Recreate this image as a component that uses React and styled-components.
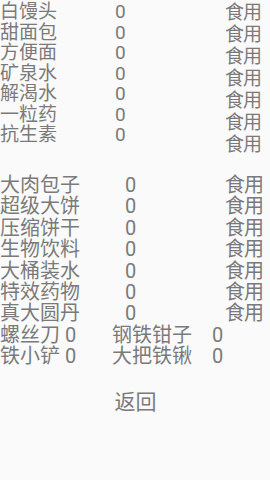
import styled, { createGlobalStyle } from 'styled-components';

const GlobalStyle = createGlobalStyle`
    html, body {
        margin: 0;
        padding: 0;
        background: #fafafa;
    }
    body {
        font-family: Roboto, "Noto Sans CJK SC", sans-serif;
        color: #7a7a7a;
    }
`;

const Page = styled.div`
    width: 270px;
    height: 480px;
    box-sizing: border-box;
    padding-top: 2px;
    display: flex;
    flex-direction: column;
    background: #fafafa;
`;

const FoodGroup = styled.div`
    display: flex;
    align-items: flex-start;
`;

const Column = styled.div`
    display: flex;
    flex-direction: column;
    width: ${(p) => p.w || 'auto'};
    font-size: ${(p) => p.size}px;
    line-height: ${(p) => p.lh}px;
`;

const Cell = styled.div`
    white-space: nowrap;
`;

const UseButton = styled.div`
    height: ${(p) => p.h}px;
    line-height: ${(p) => p.h}px;
    white-space: nowrap;
    letter-spacing: -1px;
`;

const SecondGroup = styled.div`
    margin-top: 19px;
    display: flex;
    flex-direction: column;
    font-size: 20px;
    line-height: 21.4px;
`;

const Row = styled.div`
    display: grid;
    grid-template-columns: ${(p) => p.cols};
    white-space: nowrap;
`;

const Back = styled.div`
    margin-top: 22px;
    align-self: center;
    font-size: 21px;
    line-height: 24px;
    padding-left: 1px;
`;

const first = ['白馒头', '甜面包', '方便面', '矿泉水', '解渴水', '一粒药', '抗生素'];
const second = ['大肉包子', '超级大饼', '压缩饼干', '生物饮料', '大桶装水', '特效药物', '真大圆丹'];
const tools = [
    ['螺丝刀', '钢铁钳子'],
    ['铁小铲', '大把铁锹'],
];

function App() {
    return (
        <Page>
            <GlobalStyle />
            <FoodGroup>
                <Column w="115px" size={19} lh={20.5}>
                    {first.map((n) => (
                        <Cell key={n}>{n}</Cell>
                    ))}
                </Column>
                <Column w="110px" size={19} lh={20.5}>
                    {first.map((n) => (
                        <Cell key={n}>0</Cell>
                    ))}
                </Column>
                <Column size={19} lh={22}>
                    {first.map((n) => (
                        <UseButton key={n} h={22}>食用</UseButton>
                    ))}
                </Column>
            </FoodGroup>
            <SecondGroup>
                {second.map((n) => (
                    <Row key={n} cols="125px 100px auto">
                        <span>{n}</span>
                        <span>0</span>
                        <UseButton h={21.4}>食用</UseButton>
                    </Row>
                ))}
                {tools.map(([a, b]) => (
                    <Row key={a} cols="65px 47px 100px auto">
                        <span>{a}</span>
                        <span>0</span>
                        <span>{b}</span>
                        <span>0</span>
                    </Row>
                ))}
            </SecondGroup>
            <Back>返回</Back>
        </Page>
    );
}

export default App;
